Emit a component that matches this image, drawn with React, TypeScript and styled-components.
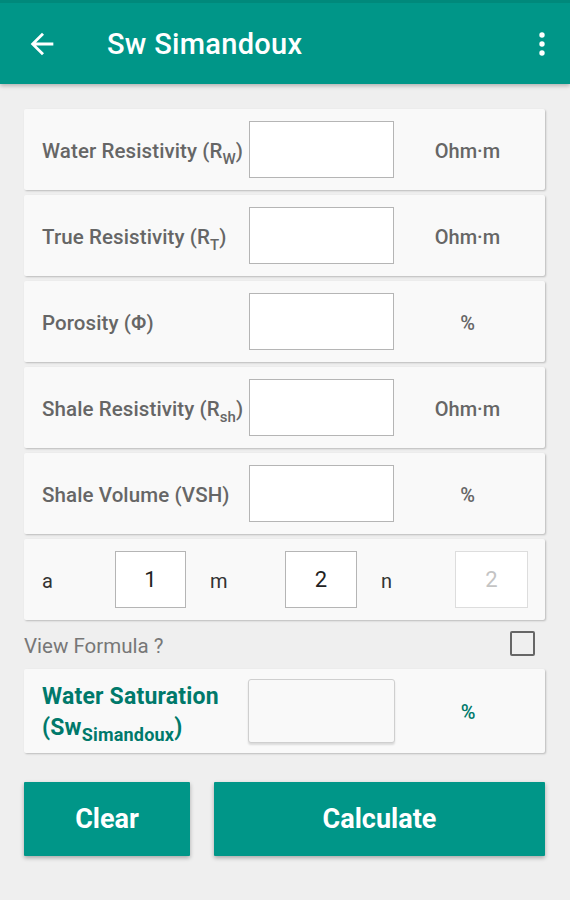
import React from "react";
import styled, { createGlobalStyle } from "styled-components";

const GlobalStyle = createGlobalStyle`
    body {
        margin: 0;
        background: #efefef;
        font-family: Roboto, "Liberation Sans", sans-serif;
    }
    * {
        box-sizing: border-box;
    }
`;

const Page = styled.div`
    width: 570px;
    min-height: 900px;
    background: #efefef;
`;

const Header = styled.header`
    height: 84px;
    background: #009688;
    border-top: 3px solid #00897b;
    display: flex;
    align-items: center;
    padding: 0 24px 0 25px;
    box-shadow: 0 2px 4px rgba(0, 0, 0, 0.25);
    color: #ffffff;
`;

const Title = styled.h1`
    flex: 1;
    margin: 0 0 0 48px;
    font-size: 29px;
    font-weight: 500;
    letter-spacing: 0.3px;
`;

const IconBtn = styled.span`
    display: flex;
    align-items: center;
    justify-content: center;
`;

const Content = styled.main`
    padding: 25px 25px 0 24px;
`;

const Card = styled.div`
    background: #f9f9f9;
    box-shadow: 1px 1px 2px rgba(0, 0, 0, 0.22);
    border-radius: 2px;
`;

const Row = styled(Card)`
    height: 81px;
    margin-bottom: 5px;
    display: flex;
    align-items: center;
    padding-left: 18px;
`;

const Label = styled.div`
    width: 207px;
    padding-top: 3px;
    font-size: 20.5px;
    font-weight: 500;
    letter-spacing: 0.1px;
    color: #666666;
    white-space: nowrap;
    sub {
        font-size: 15px;
        vertical-align: -6px;
        line-height: 0;
    }
`;

const InputBox = styled.input<{ $w?: number; $light?: boolean }>`
    width: ${(p) => p.$w ?? 145}px;
    height: 57px;
    background: #ffffff;
    border: 1.5px solid ${(p) => (p.$light ? "#dddddd" : "#b5b5b5")};
    font-family: Roboto, "Liberation Sans", sans-serif;
    font-size: 22px;
    text-align: center;
    color: #222222;
    outline: none;
    padding: 0;
    &::placeholder {
        color: #c4c4c4;
    }
`;

const Unit = styled.div<{ $accent?: boolean }>`
    flex: 1;
    text-align: center;
    font-size: 20px;
    font-weight: 500;
    color: ${(p) => (p.$accent ? "#00796b" : "#666666")};
    padding: 2px 4px 0 0;
`;

const ConstRow = styled(Row)`
    margin-bottom: 0;
`;

const ConstLabel = styled.div<{ $w: number }>`
    width: ${(p) => p.$w}px;
    padding-top: 2px;
    font-size: 20px;
    color: #333333;
`;

const Spacer = styled.div`
    width: 24px;
`;

const FormulaRow = styled.div`
    height: 49px;
    display: flex;
    align-items: center;
    justify-content: space-between;
    padding: 2px 10px 0 0;
    font-size: 20.5px;
    color: #777777;
`;

const CheckBox = styled.span`
    width: 25px;
    height: 25px;
    border: 2.5px solid #666666;
    border-radius: 2px;
    margin-top: -4px;
`;

const ResultCard = styled(Card)`
    height: 84px;
    display: flex;
    align-items: center;
    padding-left: 18px;
`;

const ResultLabel = styled.div`
    width: 206px;
    font-size: 23px;
    font-weight: 700;
    letter-spacing: 0.2px;
    line-height: 31px;
    color: #00796b;
    white-space: nowrap;
    padding-top: 1px;
    sub {
        font-size: 18px;
        vertical-align: -6px;
        line-height: 0;
    }
`;

const ResultBox = styled.div`
    width: 147px;
    height: 64px;
    background: #f9f9f9;
    border: 1.5px solid #cfcfcf;
    border-radius: 3px;
    box-shadow: 0 2px 2px rgba(0, 0, 0, 0.12);
`;

const Buttons = styled.div`
    display: flex;
    gap: 24px;
    margin-top: 29px;
`;

const Button = styled.button<{ $w?: number }>`
    flex: ${(p) => (p.$w ? `0 0 ${p.$w}px` : "1")};
    height: 74px;
    background: #009688;
    border: none;
    border-radius: 1px;
    color: #ffffff;
    font-family: Roboto, "Liberation Sans", sans-serif;
    font-size: 27px;
    font-weight: 700;
    box-shadow: 0 2px 4px rgba(0, 0, 0, 0.3);
    cursor: pointer;
`;

const fields = [
    { label: <>Water Resistivity (R<sub>W</sub>)</>, unit: "Ohm·m" },
    { label: <>True Resistivity (R<sub>T</sub>)</>, unit: "Ohm·m" },
    { label: <>Porosity (Φ)</>, unit: "%" },
    { label: <>Shale Resistivity (R<sub>sh</sub>)</>, unit: "Ohm·m" },
    { label: <>Shale Volume (VSH)</>, unit: "%" },
];

function App() {
    return (
        <Page>
            <GlobalStyle />
            <Header>
                <IconBtn>
                    <svg width="34" height="34" viewBox="0 0 24 24" fill="#ffffff">
                        <path d="M20 11H7.83l5.59-5.59L12 4l-8 8 8 8 1.41-1.41L7.83 13H20v-2z" />
                    </svg>
                </IconBtn>
                <Title>Sw Simandoux</Title>
                <IconBtn>
                    <svg width="8" height="24" viewBox="0 0 8 24" fill="#ffffff">
                        <circle cx="4" cy="3" r="2.7" />
                        <circle cx="4" cy="12" r="2.7" />
                        <circle cx="4" cy="21" r="2.7" />
                    </svg>
                </IconBtn>
            </Header>
            <Content>
                {fields.map((f, i) => (
                    <Row key={i}>
                        <Label>{f.label}</Label>
                        <InputBox />
                        <Unit>{f.unit}</Unit>
                    </Row>
                ))}
                <ConstRow>
                    <ConstLabel $w={73}>a</ConstLabel>
                    <InputBox $w={71} defaultValue="1" />
                    <Spacer />
                    <ConstLabel $w={75}>m</ConstLabel>
                    <InputBox $w={72} defaultValue="2" />
                    <Spacer />
                    <ConstLabel $w={74}>n</ConstLabel>
                    <InputBox $w={73} $light placeholder="2" />
                </ConstRow>
                <FormulaRow>
                    <span>View Formula ?</span>
                    <CheckBox />
                </FormulaRow>
                <ResultCard>
                    <ResultLabel>
                        Water Saturation
                        <br />
                        (Sw<sub>Simandoux</sub>)
                    </ResultLabel>
                    <ResultBox />
                    <Unit $accent>%</Unit>
                </ResultCard>
                <Buttons>
                    <Button $w={166}>Clear</Button>
                    <Button>Calculate</Button>
                </Buttons>
            </Content>
        </Page>
    );
}

export default App;
